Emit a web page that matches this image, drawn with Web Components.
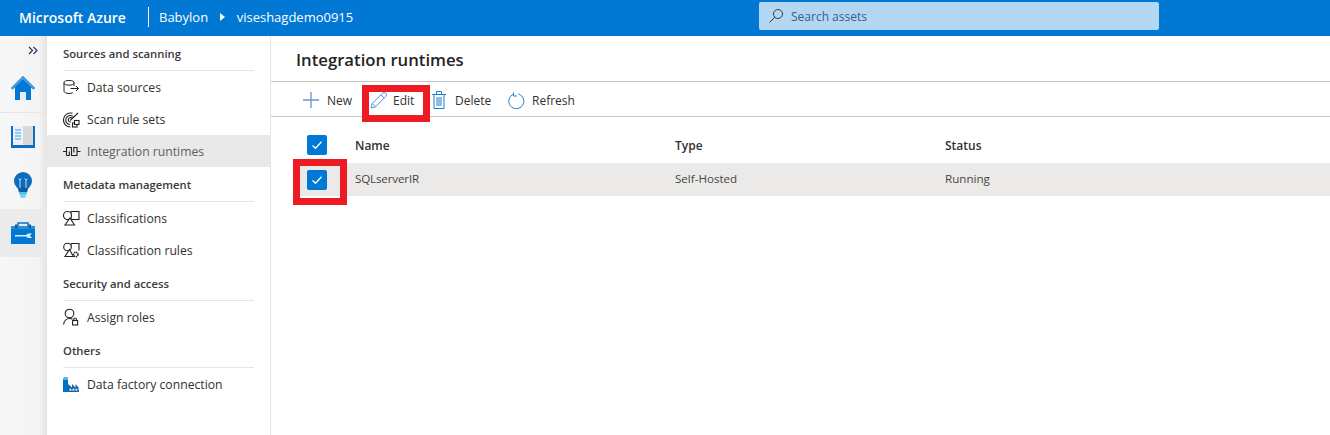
<!DOCTYPE html>
<html><head><meta charset="utf-8">
<style>
html,body{margin:0;padding:0;height:100%;overflow:hidden;background:#fff;font-family:"Open Sans","Noto Sans",sans-serif;}
</style></head><body>
<az-app></az-app>
<script>
const FONT='"Open Sans","Noto Sans",sans-serif';
const icons={
 data:'<svg width="22" height="18" viewBox="0 0 22 18" fill="none" stroke="#222" stroke-width="1"><ellipse cx="6" cy="4.800" rx="5" ry="2.300"/><path d="M1 4.800v8.400c0 1.200 2.200 2.300 5 2.300 1.500 0 2.800-.3 3.700-.8M11 4.800v3.200"/><path d="M7.500 10.500h8M13 8l2.500 2.500L13 13"/></svg>',
 scan:'<svg width="22" height="18" viewBox="0 0 22 18" fill="none" stroke="#222" stroke-width="1.100"><path d="M9.500 3.300A7 7 0 1 0 7.500 17M9.800 6.200A4.600 4.600 0 1 0 7 14.700M9.500 8.500a2.300 2.300 0 1 0-2 3.600"/><path d="M7 10.500L15 3"/><rect x="9.500" y="13" width="4.500" height="4" fill="#fff"/><rect x="11.500" y="10.500" width="4.500" height="4" fill="#fff"/></svg>',
 ir:'<svg width="22" height="18" viewBox="0 0 22 18" fill="none" stroke="#222" stroke-width="1.100"><path d="M0 9.500h3.500M14 9.500h3.500M3.500 13.500v-8h5v8h5.500v-8h-3.200v5M3.500 13.500h2.800v-4"/></svg>',
 cls:'<svg width="24" height="18" viewBox="0 0 24 18" fill="none" stroke="#222" stroke-width="1.100"><rect x="8" y="2.500" width="8" height="8" fill="#fff"/><circle cx="4.500" cy="6.500" r="4" fill="#fff"/><path d="M7 9l4.500 7H2z" fill="#fff"/></svg>',
 clsr:'<svg width="24" height="18" viewBox="0 0 24 18" fill="none" stroke="#222" stroke-width="1.100"><path d="M8 2.500h8v7"/><path d="M8 2.500v4"/><circle cx="4.500" cy="6" r="3.800" fill="#fff"/><path d="M6.500 8.500l3.800 7H2z" fill="#fff"/><circle cx="12.800" cy="13.500" r="2.200" fill="#fff" stroke-width="1.500" stroke-dasharray="1.300 .6"/></svg>',
 role:'<svg width="22" height="18" viewBox="0 0 22 18" fill="none" stroke="#222" stroke-width="1.100"><circle cx="6.500" cy="5.500" r="4.300"/><path d="M.6 16.500c.4-3.500 2.900-6 5.900-6 1.200 0 2.200.3 3 .8"/><rect x="9.600" y="12.500" width="5" height="4.500"/><path d="M10.800 12.500v-1.200a1.300 1.300 0 0 1 2.600 0v1.200"/></svg>',
 fac:'<svg width="22" height="18" viewBox="0 0 22 18"><path d="M0 3.500c1-1.500 4-2 5 -.5V17H0z" fill="#0072c6"/><path d="M0 3.500c1-1.500 4-2 5 -.5v2H0z" fill="#5db4e8"/><path d="M5 9l4 3.500V9l3.500 3.500V9l3 3.500.5 4.500H5z" fill="#1668ad"/><g fill="#fff"><rect x="6.500" y="13.800" width="1.800" height="1.800"/><rect x="9.500" y="13.800" width="1.800" height="1.800"/><rect x="12.500" y="13.800" width="1.800" height="1.800"/></g></svg>'
};

class NavSection extends HTMLElement{
 constructor(){super();this.attachShadow({mode:'open'}).innerHTML=`<style>
 :host{display:block}
 .t{height:34px;box-sizing:border-box;margin:0 16px;display:flex;align-items:center;font-size:11.300px;font-weight:600;color:#3b3a39;}
 hr{margin:0 16px;border:0;height:1px;background:#e6e6e6;}
 </style><div class="t">${this.getAttribute('title')}</div><hr><slot></slot>`;}
}
customElements.define('nav-section',NavSection);

class NavItem extends HTMLElement{
 constructor(){super();const sel=this.hasAttribute('selected');this.attachShadow({mode:'open'}).innerHTML=`<style>
 :host{display:flex;align-items:center;height:32px;padding-left:16px;background:${sel?'#e9e9e9':'transparent'};color:${sel?'#605e5c':'#323130'};font-size:12.200px}
 .i{width:24px;height:18px;display:flex;align-items:center;flex:none}
 </style><span class="i">${icons[this.getAttribute('icon')]}</span><slot></slot>`;}
}
customElements.define('nav-item',NavItem);

class RailButton extends HTMLElement{
 constructor(){super();this.attachShadow({mode:'open'}).innerHTML=`<style>
 :host{display:flex;align-items:center;justify-content:center;width:46px;height:48px;box-sizing:content-box}
 :host([active]){background:linear-gradient(90deg,#ebebeb 93%,transparent)}
 :host([line]){border-bottom:1px solid #e6e6e6}
 </style><slot></slot>`;}
}
customElements.define('rail-button',RailButton);

class ToolBtn extends HTMLElement{
 constructor(){super();this.attachShadow({mode:'open'}).innerHTML=`<style>
 :host{display:inline-flex;align-items:center;font-size:12px;color:#323130;height:34px}
 </style><slot name="icon"></slot><slot></slot>`;}
}
customElements.define('tool-btn',ToolBtn);

class CheckBox extends HTMLElement{
 constructor(){super();this.attachShadow({mode:'open'}).innerHTML=`<style>
 :host{display:flex;width:20px;height:20px;background:#0078d4;border-radius:2px;align-items:center;justify-content:center}
 </style><svg width="12" height="10" viewBox="0 0 12 10" fill="none" stroke="#fff" stroke-width="1.300"><path d="M1.500 5.500l3 2.800 6-6.500"/></svg>`;}
}
customElements.define('check-box',CheckBox);

class GridRow extends HTMLElement{
 constructor(){super();const sel=this.hasAttribute('selected'),head=this.hasAttribute('head');this.attachShadow({mode:'open'}).innerHTML=`<style>
 :host{display:grid;grid-template-columns:59px 320px 270px 1fr;align-items:center;height:${head?46:33}px;box-sizing:border-box;padding-top:${head?10:0}px;margin-left:25px;background:${sel?'#ebeae8':'transparent'};font-size:${head?12:11.600}px;font-weight:${head?600:400};color:${head?'#323130':'#484644'}}
 .c{padding:${head?0:1}px 0 0 11px}
 .t{padding-bottom:${head?0:2}px}
 .a{letter-spacing:${head?0:-.15}px}
 </style><div class="c"><check-box></check-box></div><div class="t a">${this.getAttribute('a')}</div><div class="t">${this.getAttribute('b')}</div><div class="t">${this.getAttribute('c')}</div>`;}
}
customElements.define('grid-row',GridRow);

class RedMark extends HTMLElement{
 constructor(){super();this.attachShadow({mode:'open'}).innerHTML=`<style>
 :host{position:absolute;box-sizing:border-box;border:7.500px solid #ed1c24;pointer-events:none}
 </style>`;}
}
customElements.define('red-mark',RedMark);

class AzHeader extends HTMLElement{
 constructor(){super();this.attachShadow({mode:'open'}).innerHTML=`<style>
 :host{display:flex;align-items:center;height:36px;box-sizing:border-box;padding-bottom:2px;background:#0078d4;color:#fff;font-size:13px}
 .brand{font-weight:600;font-size:14px;margin-left:19px;width:129px}
 .sep{width:1px;height:20px;background:#fff;margin-right:10px}
 .tri{width:0;height:0;border-left:5px solid #fff;border-top:4px solid transparent;border-bottom:4px solid transparent;margin:0 11.500px 0 12px}
 .search{margin:-2px 0 0 379px;width:400px;height:28px;background:#b3d6f2;border-radius:2px;display:flex;align-items:center;color:#33618f;font-size:12px;box-sizing:border-box;padding-left:9px;gap:7px}
 .cr{width:221px;display:flex;align-items:center}
 </style><div class="brand">Microsoft Azure</div><div class="sep"></div><div class="cr"><span>Babylon</span><span class="tri"></span><span>viseshagdemo0915</span></div>
 <div class="search"><svg width="16" height="16" viewBox="0 0 16 16" fill="none" stroke="#3a3a3a" stroke-width="1"><circle cx="10" cy="6" r="4.500"/><path d="M6.800 9.300L1.500 14.500"/></svg><span>Search assets</span></div>`;}
}
customElements.define('az-header',AzHeader);

class AzRail extends HTMLElement{
 constructor(){super();this.attachShadow({mode:'open'}).innerHTML=`<style>
 :host{display:block;width:47px;flex:none;background:linear-gradient(90deg,#f7f7f7,#f4f4f4 82%,#e4e4e4);box-sizing:border-box}
 .ex{height:28px;display:flex;justify-content:flex-end;align-items:center;padding-right:9px;box-sizing:border-box}
 </style><div class="ex"><svg width="10" height="9" viewBox="0 0 10 9" fill="none" stroke="#1f3a5f" stroke-width="1.200"><path d="M1 1l3.500 3.500L1 8M5.500 1L9 4.500 5.500 8"/></svg></div>
 <rail-button line><svg width="24" height="24" viewBox="0 0 24 24"><path d="M12 0L0 12l1.500 1.500L4 11.500V24h16V11.500l2.500 2L24 12z" fill="#0078d4"/><path d="M12 0L0 12l1.500 1.500L12 3.500l10.500 10L24 12z" fill="#3f9be0"/><rect x="9" y="16" width="6" height="8" fill="#e8eef4"/></svg></rail-button>
 <rail-button><svg width="24" height="22" viewBox="0 0 24 22"><rect x="0" y="0" width="24" height="22" fill="#0b6fc2"/><rect x="2" y="0" width="10" height="19" fill="#eaf3fb"/><rect x="12" y="0" width="10" height="19" fill="#d9d9d9"/><path d="M4 4h6M4 7h6M4 10h6M4 13h6" stroke="#3f9be0" stroke-width="1"/></svg></rail-button>
 <rail-button><svg width="18" height="26" viewBox="0 0 18 26"><circle cx="9" cy="9" r="9" fill="#0a6cbd"/><path d="M3.500 15h11L13 20.500H5z" fill="#0a5ea8"/><path d="M5 20.500h8l-1 3H6z" fill="#50c8f0"/><path d="M6.500 24h5v1.500h-5z" fill="#50c8f0"/><path d="M6 7.500v8.500M12 7.500v8.500" stroke="#bcdcf4" stroke-width="1"/><path d="M4.500 6.500l1.500 1.500 1.500-1.500M10.500 6.500l1.500 1.500 1.500-1.500" fill="none" stroke="#bcdcf4" stroke-width="1"/></svg></rail-button>
 <rail-button active><svg width="24" height="22" viewBox="0 0 24 22"><path d="M7 5V1h10v4" fill="none" stroke="#0078d4" stroke-width="1.500"/><rect x="0" y="4" width="24" height="18" fill="#0078d4"/><rect x="0" y="4" width="24" height="3" fill="#2a90de"/><rect x="4" y="2.500" width="2.500" height="4" fill="#0a5ea8"/><rect x="17.500" y="2.500" width="2.500" height="4" fill="#0a5ea8"/><path d="M4 13h11l2-1.500h4l-2 2.300 2 2.200h-4l-2-1.500H4z" fill="#dcecf9"/></svg></rail-button>`;}
}
customElements.define('az-rail',AzRail);

class AzNav extends HTMLElement{
 constructor(){super();this.attachShadow({mode:'open'}).innerHTML=`<style>
 :host{display:block;width:224px;flex:none;border-right:1px solid #e6e6e6;box-sizing:border-box;font-family:${FONT}}
 </style><slot></slot>`;}
}
customElements.define('az-nav',AzNav);

class AzMain extends HTMLElement{
 constructor(){super();this.attachShadow({mode:'open'}).innerHTML=`<style>
 :host{display:block;flex:1;position:relative;min-width:0}
 h1{margin:0;height:46px;box-sizing:border-box;padding:13px 0 0 25px;font-size:16.700px;font-weight:600;color:#252423;line-height:22px;border-bottom:1px solid #c8c6c4}
 .tb{height:35px;box-sizing:border-box;border-bottom:1px solid #c8c6c4;display:flex;align-items:center;padding:2px 0 0 32px}
 tool-btn svg{display:block}
 red-mark.e{left:91px;top:49px;width:68px;height:37px}
 red-mark.r{left:22px;top:123px;width:54px;height:46px}
 </style><h1>Integration runtimes</h1>
 <div class="tb">
 <tool-btn style="width:67px"><svg slot="icon" width="16" height="16" viewBox="0 0 16 16" style="margin-right:8px" fill="none" stroke="#6f8fd8" stroke-width="1.300"><path d="M8 0v16M0 8h16"/></svg>New</tool-btn>
 <tool-btn style="width:62px"><svg slot="icon" width="17" height="17" viewBox="0 0 17 17" style="margin-right:6px" fill="none" stroke="#4f8fd8" stroke-width="1"><path d="M1 16l1.200-4.500L12.500 1.200a2 2 0 0 1 3.300 3.300L5.500 14.800zM2.200 11.500l3.300 3.300M11 3l3 3"/></svg>Edit</tool-btn>
 <tool-btn style="width:76px"><svg slot="icon" width="14" height="18" viewBox="0 0 14 18" style="margin-right:9px" fill="none" stroke="#1a7fd0" stroke-width="1"><path d="M0 3.500h14M4.500 3.500v-3h5v3M2 3.500v14h10v-14M5 6v9M7 6v9M9 6v9"/></svg>Delete</tool-btn>
 <tool-btn><svg slot="icon" width="17" height="17" viewBox="0 0 17 17" style="margin-right:7px" fill="none" stroke="#1a7fd0" stroke-width="1"><path d="M5.500 2.200a7.500 7.500 0 1 0 5 -.2M5.500 .5v3.500h3.500"/></svg>Refresh</tool-btn>
 </div>
 <grid-row head a="Name" b="Type" c="Status"></grid-row>
 <grid-row selected a="SQLserverIR" b="Self-Hosted" c="Running"></grid-row>
 <red-mark class="e"></red-mark><red-mark class="r"></red-mark>`;}
}
customElements.define('az-main',AzMain);

class AzApp extends HTMLElement{
 constructor(){super();this.attachShadow({mode:'open'}).innerHTML=`<style>
 :host{display:flex;flex-direction:column;width:1330px;height:435px;overflow:hidden;font-family:${FONT}}
 .b{display:flex;flex:1;min-height:0}
 </style><az-header></az-header><div class="b"><az-rail></az-rail>
 <az-nav>
 <nav-section title="Sources and scanning"><nav-item icon="data">Data sources</nav-item><nav-item icon="scan">Scan rule sets</nav-item><nav-item icon="ir" selected>Integration runtimes</nav-item></nav-section>
 <nav-section title="Metadata management"><nav-item icon="cls">Classifications</nav-item><nav-item icon="clsr">Classification rules</nav-item></nav-section>
 <nav-section title="Security and access"><nav-item icon="role">Assign roles</nav-item></nav-section>
 <nav-section title="Others"><nav-item icon="fac">Data factory connection</nav-item></nav-section>
 </az-nav><az-main></az-main></div>`;}
}
customElements.define('az-app',AzApp);
</script>
</body></html>
